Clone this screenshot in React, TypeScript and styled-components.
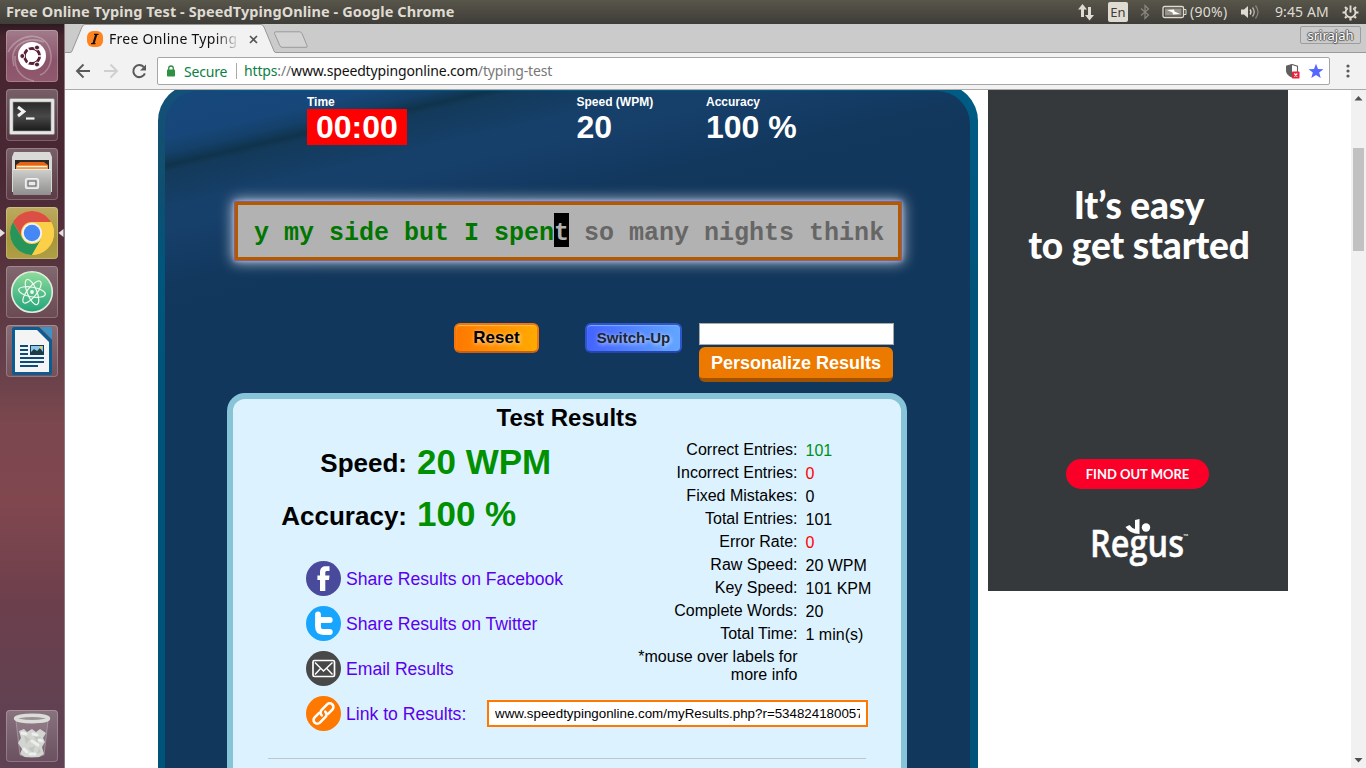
import React from 'react';
import styled, { createGlobalStyle } from 'styled-components';

const GlobalStyle = createGlobalStyle`
  * { box-sizing: border-box; }
  html, body { margin: 0; padding: 0; overflow: hidden; background: #fff; }
  svg { display: block; flex: none; }
`;

const uiFont = `'Noto Sans', 'Open Sans', sans-serif`;
const pageFont = `'Liberation Sans', Arial, sans-serif`;

const Screen = styled.div`
  width: 1366px;
  height: 768px;
  display: flex;
  flex-direction: column;
  overflow: hidden;
`;

/* ---------- system bar ---------- */
const SystemBar = styled.header`
  height: 24px;
  flex: none;
  display: flex;
  align-items: center;
  justify-content: space-between;
  padding: 0 7px 0 6px;
  background: linear-gradient(#58554a, #3f3d38);
  color: #dfdbd2;
  font-family: ${uiFont};
`;

const WindowTitle = styled.div`
  font-size: 14.5px;
  font-weight: 700;
  line-height: 22px;
  padding-bottom: 2px;
  white-space: nowrap;
  letter-spacing: 0.08px;
`;

const Indicators = styled.div`
  display: flex;
  align-items: center;
  height: 24px;
  font-size: 14px;
  white-space: nowrap;
`;

const Lang = styled.span`
  width: 20px;
  height: 20px;
  margin: 0 12px 0 13px;
  border-radius: 2px;
  background: #dfdbd2;
  color: #3f3d38;
  font-size: 13px;
  line-height: 21px;
  text-align: center;
`;

const BarText = styled.span<{ $w: number; $ml: number; $ls?: number }>`
  width: ${(p) => p.$w}px;
  margin-left: ${(p) => p.$ml}px;
  letter-spacing: ${(p) => p.$ls ?? 0}px;
  line-height: 22px;
  padding-bottom: 1px;
`;

const Workspace = styled.div`
  flex: 1;
  min-height: 0;
  display: flex;
`;

/* ---------- launcher ---------- */
const Dock = styled.nav`
  width: 65px;
  flex: none;
  display: flex;
  flex-direction: column;
  align-items: center;
  gap: 7px;
  padding: 6px 1px 6px 0;
  border-right: 1px solid #8d7780;
  background: linear-gradient(#2f1a22 0, #47252f 14px, #4a2833 150px, #65404a 340px, #7c474e 400px, #80474f 480px, #6c3f4c 580px, #5f4152 700px, #5f4253 100%);
`;

const Tile = styled.div<{ $bg?: string; $last?: boolean }>`
  width: 52px;
  height: 52px;
  flex: none;
  display: flex;
  align-items: center;
  justify-content: center;
  border-radius: 4px;
  margin-top: ${(p) => (p.$last ? 'auto' : '0')};
  background: ${(p) => p.$bg ?? 'linear-gradient(rgba(255,255,255,.26), rgba(255,255,255,.08))'};
  box-shadow: inset 0 0 0 1px rgba(255, 255, 255, 0.22);
`;

const ActiveRow = styled.div`
  width: 64px;
  display: flex;
  align-items: center;
  justify-content: space-between;
`;

/* ---------- browser chrome ---------- */
const Browser = styled.main`
  flex: 1;
  min-width: 0;
  display: flex;
  flex-direction: column;
`;

const TabStrip = styled.div`
  height: 29px;
  flex: none;
  display: flex;
  align-items: flex-start;
  background: linear-gradient(#cbcbcb 0 28px, #9a9a9a 28px);
`;

const Tab = styled.div`
  width: 214px;
  height: 29px;
  display: grid;
  grid-template: 29px / 214px;
  & > * { grid-area: 1 / 1; }
`;

const TabBody = styled.div`
  display: flex;
  align-items: center;
  padding: 1px 0 0 22px;
  font: 14px ${uiFont};
  color: #111;
`;

const TabTitle = styled.span`
  width: 129px;
  height: 22px;
  line-height: 22px;
  margin-left: 6px;
  overflow: hidden;
  white-space: nowrap;
  letter-spacing: 0.28px;
  mask-image: linear-gradient(90deg, #000 106px, transparent 131px);
`;

const User = styled.div`
  width: 61px;
  height: 18px;
  margin: 2px 5px 0 auto;
  border: 1px solid #9d9d9d;
  border-radius: 2px;
  color: #fff;
  font: 13px/16px ${uiFont};
  text-align: center;
  text-shadow: 0 1px 1px #555, 0 -1px 1px #555, 1px 0 1px #555, -1px 0 1px #555;
`;

const Toolbar = styled.div`
  height: 37px;
  flex: none;
  display: flex;
  align-items: center;
  padding: 0 5px 0 10px;
  background: #f2f2f2;
  border-bottom: 1px solid #aaa;
`;

const Omnibox = styled.div`
  width: 1173px;
  height: 28px;
  margin-left: 9px;
  display: flex;
  align-items: center;
  padding: 0 5px 0 8px;
  border: 1px solid #a6a6a6;
  border-radius: 2px;
  background: #fff;
  font: 14px ${uiFont};
  color: #111;
  white-space: nowrap;
`;

const Secure = styled.span`
  box-sizing: content-box;
  width: 43px;
  margin-left: 8px;
  padding-right: 9px;
  color: #0b8043;
  letter-spacing: -0.2px;
`;

const Url = styled.span`
  flex: 1;
  padding-left: 7px;
  line-height: 16px;
  border-left: 1px solid #aaa;
  letter-spacing: -0.15px;
`;

const Scheme = styled.span`color: #0b8043;`;
const Faint = styled.span`color: #777;`;

/* ---------- page ---------- */
const Page = styled.div`
  flex: 1;
  min-height: 0;
  display: flex;
  align-items: flex-start;
  padding-left: 93px;
  background: #fff;
  overflow: hidden;
  font-family: ${pageFont};
`;

const Panel = styled.section`
  width: 820px;
  height: 720px;
  flex: none;
  margin-top: -6px;
  padding: 7px 8px 0 7px;
  border-radius: 37px 37px 0 0;
  background:
    linear-gradient(#14507a 0, #11506f 78px, #0d4f72 110px, #00567c 190px, rgba(0, 86, 124, 0) 300px) 0 0 / 60px 100% no-repeat,
    linear-gradient(#005c85, #00547a 200px);
`;

const PanelInner = styled.div`
  height: 720px;
  border-radius: 33px 33px 0 0;
  padding: 5px 0 0 62px;
  background: linear-gradient(167deg, #17487b 0, #17477a 46px, #144069 61px, #0f334c 73px, #133a5a 79px, #163f69 112px, #163f6a 135px, #12385e 190px, #12375c 215px);
`;

const Stats = styled.div`
  display: grid;
  grid-template-columns: 269.500px 129.500px 130px;
  padding-left: 80px;
  height: 105px;
  color: #fff;
`;

const StatLabel = styled.div`
  font: bold 12px/13px ${pageFont};
`;

const StatValue = styled.div<{ $alert?: boolean }>`
  width: ${(p) => (p.$alert ? '100px' : 'auto')};
  height: 36px;
  padding-left: ${(p) => (p.$alert ? 9 : 0)}px;
  background: ${(p) => (p.$alert ? '#f00' : 'none')};
  font: bold 32px/37px ${pageFont};
  white-space: nowrap;
`;

const TypingBox = styled.div`
  width: 668px;
  height: 60px;
  margin-left: 7px;
  padding: 8px 0 0 16px;
  border: 4px solid #b35900;
  outline: 1px solid #8a5f80;
  outline-offset: -1px;
  background: #b2b2b2;
  box-shadow: 0 0 4px 0 rgba(175, 190, 255, 0.8), 0 0 13px 1px rgba(255, 255, 255, 0.75);
  font: bold 25px/34px 'Liberation Mono', 'Courier New', monospace;
  white-space: pre;
  color: #666;
`;

const Line = styled.span`
  display: inline-block;
  height: 34px;
  line-height: 42px;
  vertical-align: top;
`;
const Typed = styled.span`color: #007500;`;
const Cursor = styled(Line)`
  background: #000;
  color: #b2b2b2;
`;

const Controls = styled.div`
  display: flex;
  align-items: flex-start;
  padding: 62px 0 0 227px;
`;

const GlossButton = styled.button<{ $w: number; $blue?: boolean }>`
  width: ${(p) => p.$w}px;
  height: 30px;
  margin-right: ${(p) => (p.$blue ? 0 : 46)}px;
  padding: 0;
  border: 2px solid ${(p) => (p.$blue ? '#2f55cc' : '#f57410')};
  border-bottom-color: ${(p) => (p.$blue ? '#2546b0' : '#c85f14')};
  border-radius: 6px;
  background: linear-gradient(90deg, ${(p) => (p.$blue ? '#4463ff, #62a6ff' : '#ff7800, #ffab00')});
  box-shadow: inset 0 1px 1px ${(p) => (p.$blue ? '#7fb0ff' : '#ffc052')};
  color: ${(p) => (p.$blue ? '#1d2733' : '#000')};
  font: bold ${(p) => (p.$blue ? 15 : 17)}px/26px ${pageFont};
  white-space: nowrap;
  text-shadow: 1px 1px 4px rgba(255, 255, 255, 0.75);
`;

const Personalize = styled.div`
  width: 195px;
  margin-left: 17px;
`;

const NameField = styled.div`
  height: 22px;
  background: #fff;
  border: 1px solid #a9a9a9;
`;

const PersonalizeButton = styled.button`
  display: block;
  width: 194px;
  height: 35px;
  margin-top: 2px;
  padding: 2px 0 0;
  border: 0;
  border-bottom: 4px solid #a35200;
  border-radius: 6px;
  background: #ec7a00;
  color: #fff;
  font: bold 18px/29px ${pageFont};
`;

const Card = styled.div`
  width: 680px;
  height: 420px;
  margin-top: 11px;
  border: 6px solid #87c4d8;
  border-radius: 18px;
  background: #dcf2ff;
  color: #000;
`;

const CardTitle = styled.h2`
  margin: 0;
  height: 38px;
  font: bold 24px/38px ${pageFont};
  text-align: center;
`;

const CardBody = styled.div`
  display: flex;
  height: 264px;
`;

const Summary = styled.div`
  width: 360px;
  flex: none;
  padding-left: 35px;
`;

const ScoreRow = styled.div`
  display: flex;
  align-items: flex-start;
  height: 52px;
  white-space: nowrap;
  font-weight: 700;
`;

const ScoreLabel = styled.div<{ $lh: number }>`
  width: 139px;
  text-align: right;
  font-size: 26px;
  line-height: ${(p) => p.$lh}px;
`;

const ScoreValue = styled.div`
  margin-left: 10px;
  font-size: 35px;
  line-height: 50px;
  color: #009000;
`;

const ShareList = styled.div`
  display: flex;
  flex-direction: column;
  gap: 10px;
  padding: 20px 0 0 38px;
`;

const Share = styled.div`
  display: flex;
  align-items: center;
  height: 35px;
  gap: 5px;
  color: #5a00ee;
  font-size: 17.6px;
  white-space: nowrap;
`;

const ShareText = styled.span`
  padding-top: 2px;
`;

const Details = styled.dl`
  margin: 0;
  padding-top: 2px;
  display: grid;
  grid-template-columns: 204.500px 90px;
  grid-auto-rows: 23px;
  column-gap: 8px;
  font-size: 16px;
  align-content: start;
`;

const Term = styled.dt`
  line-height: 22px;
  text-align: right;
  white-space: nowrap;
`;

const Value = styled.dd<{ $c?: string }>`
  margin: 0;
  line-height: 24px;
  color: ${(p) => p.$c ?? '#000'};
  white-space: nowrap;
`;

const Hint = styled.dt`
  padding: 2px 0 0 30px;
  line-height: 18px;
  text-align: right;
`;

const LinkRow = styled.div`
  display: flex;
  align-items: center;
  height: 35px;
  margin-top: -5px;
  padding-left: 73px;
`;

const LinkField = styled.div`
  width: 381px;
  height: 27px;
  margin-left: auto;
  margin-right: 33px;
  padding: 0 6px;
  border: 2px solid #ff7800;
  background: #fff;
  font: 13.33px/23px ${pageFont};
  white-space: nowrap;
`;

const Clip = styled.div`overflow: hidden;`;

const Rule = styled.div`
  height: 1px;
  margin: 27px 35px 0;
  background: #c4c4c4;
`;

/* ---------- advert ---------- */
const Ad = styled.aside`
  width: 300px;
  height: 501px;
  flex: none;
  margin-left: 10px;
  padding-top: 95px;
  display: flex;
  flex-direction: column;
  align-items: center;
  background: #36393c;
  color: #fff;
  font-family: Lato, sans-serif;
`;

const AdHeadline = styled.div`
  height: 274px;
  padding-left: 2px;
  font-size: 37px;
  line-height: 40px;
  font-weight: 900;
  text-align: center;
  white-space: nowrap;
  letter-spacing: -0.15px;
`;

const AdButton = styled.div`
  width: 143px;
  height: 30px;
  margin-right: 1px;
  border-radius: 15px;
  background: #fa0029;
  font-size: 13px;
  font-weight: 700;
  line-height: 30px;
  text-align: center;
`;

const AdLogo = styled.div`padding: 26px 0 0 9px;`;

const Scrollbar = styled.div`
  width: 15px;
  height: 678px;
  margin-left: auto;
  flex: none;
  display: flex;
  flex-direction: column;
  align-items: center;
  background: #f1f1f1;
`;

const ArrowUp = styled.svg`margin-top: 4px;`;

const Thumb = styled.div`
  width: 11px;
  height: 103px;
  margin: 46px 0 auto;
  background: #c1c1c1;
`;

/* ---------- launcher icons ---------- */
const UbuntuIcon = () => (
  <svg width="52" height="52" viewBox="0 0 52 52">
    <g fill="none" stroke="#fff" strokeOpacity=".28" strokeWidth="1.6">
      <path d="M2 22C12 3 38 0 44 20C48 34 40 43 34 45" />
      <path d="M8 36C2 14 22 6 38 12" />
      <path d="M9 26C8 42 18 49 28 51" />
    </g>
    <circle cx="26" cy="26" r="14" fill="#fff" />
    <circle cx="26" cy="26" r="7.600" fill="none" stroke="#5a2238" strokeWidth="3" />
    <path d="M26 26L37 26M26 26L20.500 16.500M26 26L20.500 35.500" stroke="#fff" strokeWidth="1.600" />
    <circle cx="26" cy="26" r="6" fill="#fff" />
    <g fill="#5a2238" stroke="#fff" strokeWidth="1">
      <circle cx="16.300" cy="26" r="2.500" />
      <circle cx="31" cy="17.500" r="2.500" />
      <circle cx="31" cy="34.500" r="2.500" />
    </g>
  </svg>
);

const TerminalIcon = () => (
  <svg width="52" height="52" viewBox="0 0 52 52">
    <defs>
      <linearGradient id="term" x1="0" y1="0" x2="0" y2="1">
        <stop offset="0" stopColor="#2a2a2a" />
        <stop offset=".5" stopColor="#484848" />
        <stop offset="1" stopColor="#1b1b1b" />
      </linearGradient>
    </defs>
    <rect x="3.500" y="9.500" width="45" height="36" rx="1.500" fill="#e6e6e4" stroke="#8d8d8b" />
    <rect x="7" y="13" width="38" height="29" fill="url(#term)" stroke="#999" strokeWidth=".6" />
    <path d="M12 18L17.800 22.500L12 27" fill="none" stroke="#f2f2f2" strokeWidth="3" />
    <path d="M20 29.500H28.500" stroke="#f2f2f2" strokeWidth="2.200" />
  </svg>
);

const FilesIcon = () => (
  <svg width="52" height="52" viewBox="0 0 52 52">
    <defs>
      <linearGradient id="cab" x1="0" y1="0" x2="0" y2="1">
        <stop offset="0" stopColor="#cfcfcd" />
        <stop offset="1" stopColor="#8f8f8d" />
      </linearGradient>
    </defs>
    <path d="M6 9L8 4H44L46 9V44H6Z" fill="#d9d9d7" />
    <rect x="9" y="12" width="34" height="14" fill="#2b2724" />
    <path d="M10 17L14 14H38L42 17V26H10Z" fill="#e2641b" />
    <path d="M10 17.500H42V26H10Z" fill="#f19a42" />
    <path d="M11 18.500H41" stroke="#fff2d6" strokeWidth="1.300" />
    <rect x="7" y="21" width="38" height="26" rx="1" fill="url(#cab)" />
    <path d="M7 21.500H45" stroke="#e9e9e7" />
    <rect x="19.500" y="30.500" width="13" height="10" rx="2" fill="#ddd" stroke="#efefef" strokeWidth="1.200" />
    <rect x="22" y="33" width="8" height="5" fill="#e9e9e9" stroke="#555" />
  </svg>
);

const ChromeIcon = () => (
  <svg width="52" height="52" viewBox="0 0 52 52">
    <circle cx="26" cy="26" r="22" fill="#ffcd40" />
    <path d="M6.950 15A22 22 0 0 1 45.050 15H26A11 11 0 0 0 16.470 31.500Z" fill="#db4f45" />
    <path d="M6.950 15A22 22 0 0 0 26 48L35.530 31.500A11 11 0 0 1 16.470 31.500Z" fill="#27955a" />
    <path d="M45.050 15A22 22 0 0 1 26 48L35.530 31.500A11 11 0 0 0 26 15Z" fill="#fbcf48" />
    <circle cx="26" cy="26" r="10.200" fill="#f1f1f1" />
    <circle cx="26" cy="26" r="8.200" fill="#4587f4" />
  </svg>
);

const AtomIcon = () => (
  <svg width="52" height="52" viewBox="0 0 52 52">
    <defs>
      <linearGradient id="atom" x1="0" y1="0" x2="0" y2="1">
        <stop offset="0" stopColor="#8edd9a" />
        <stop offset="1" stopColor="#22a37b" />
      </linearGradient>
    </defs>
    <circle cx="26" cy="26" r="20.300" fill="url(#atom)" stroke="#e4ece2" strokeWidth="1.600" />
    <g fill="none" stroke="#effaf0" strokeWidth="1.200">
      <ellipse cx="26" cy="26" rx="13.500" ry="4.800" transform="rotate(10 26 26)" />
      <ellipse cx="26" cy="26" rx="13.500" ry="4.800" transform="rotate(68 26 26)" />
      <ellipse cx="26" cy="26" rx="13.500" ry="4.800" transform="rotate(128 26 26)" />
    </g>
    <circle cx="26" cy="26" r="1.900" fill="#effaf0" />
  </svg>
);

const WriterIcon = () => (
  <svg width="52" height="52" viewBox="0 0 52 52">
    <path d="M8 2H33L46 15V48Q46 50 44 50H8Q6 50 6 48V4Q6 2 8 2Z" fill="#0d5c91" />
    <path d="M34 2H44Q46 2 46 4V14Z" fill="#3f92c4" />
    <path d="M9 5H31L43 17V47H9Z" fill="#f4f4f4" />
    <g stroke="#0d4c79" strokeWidth="2">
      <path d="M14 21H22M14 25H22M14 29H22M14 33H38M14 37H38M14 41H32" />
    </g>
    <rect x="24.500" y="20.500" width="13" height="9" fill="#8cc8ea" stroke="#123c5c" />
    <path d="M25 29V27L28 24L31 26L34 23L37 27V29Z" fill="#1d3c44" />
    <circle cx="35" cy="22.500" r="1.300" fill="#f5d340" />
  </svg>
);

const TrashIcon = () => (
  <svg width="52" height="52" viewBox="0 0 52 52">
    <path d="M10 11L14 45Q26 50 38 45L42 11Z" fill="#fff" fillOpacity=".1" stroke="#ddd" strokeOpacity=".35" />
    <path d="M13 21L18 19L21 22L26 19L30 22L34 19L40 23L37 28L39 32L36 37L38 44L33 47H19L14 44L16 39L12 33L15 28Z" fill="#d2d5d0" />
    <path d="M18 25L24 29L20 34ZM28 26L35 27L31 33ZM22 38L29 36L27 43ZM33 38L35 42L31 44Z" fill="#c2c5c0" />
    <path d="M16 23L20 24M27 24L31 25M26 31L32 35M18 39L21 42M33 30L36 31M24 44H29" stroke="#ecefeb" strokeWidth="3" strokeLinecap="round" />
    <ellipse cx="26" cy="8.500" rx="16.500" ry="3.200" fill="#9a9297" stroke="#dcdcd8" strokeWidth="3.400" />
  </svg>
);

/* ---------- small icons ---------- */
const FacebookIcon = () => (
  <svg width="35" height="35" viewBox="0 0 35 35">
    <circle cx="17.500" cy="17.500" r="17.500" fill="#4a4a9c" />
    <path d="M14 30V19H11.400V14.500H14V11.500C14 7.200 16.300 5.300 20 5.300H23.500V10H21.300C19.700 10 19.300 10.600 19.300 12V14.500H23.500L23 19H19.300V30Z" fill="#fff" />
  </svg>
);

const TwitterIcon = () => (
  <svg width="35" height="35" viewBox="0 0 35 35">
    <circle cx="17.500" cy="17.500" r="17.500" fill="#18a5fe" />
    <path d="M12 8.500V20.500Q12 26 17.500 26H23.800M12 14H23.800" fill="none" stroke="#fff" strokeWidth="5.800" strokeLinecap="round" />
  </svg>
);

const MailIcon = () => (
  <svg width="35" height="35" viewBox="0 0 35 35">
    <circle cx="17.500" cy="17.500" r="17.500" fill="#484848" />
    <g fill="none" stroke="#fff" strokeWidth="1.700">
      <rect x="7" y="9.500" width="21.500" height="16" rx="1.500" />
      <path d="M9 11.500L17.500 20L26.500 11.500M9 23.500L14.500 17.500M26.500 23.500L20.800 17.500" strokeWidth="1.400" />
    </g>
  </svg>
);

const LinkIcon = () => (
  <svg width="35" height="35" viewBox="0 0 35 35">
    <circle cx="17.500" cy="17.500" r="17.500" fill="#ff7800" />
    <g fill="none" stroke="#fff" strokeWidth="2.600" transform="rotate(-45 17.500 17.500)" strokeLinecap="round">
      <path d="M14.500 14H8.500A3.700 3.700 0 0 0 8.500 21.400H16.500A3.700 3.700 0 0 0 20 17.500" />
      <path d="M20.500 21H26.500A3.700 3.700 0 0 0 26.500 13.600H18.500A3.700 3.700 0 0 0 15 17.500" />
    </g>
  </svg>
);

const RegusLogo = () => (
  <svg width="108" height="60" viewBox="0 0 108 60">
    <g fill="#fff">
      <text x="1" y="42" fontFamily="'Open Sans', sans-serif" fontWeight="600" fontSize="37" textLength="94" lengthAdjust="spacingAndGlyphs" stroke="#fff" strokeWidth=".4">Regus</text>
      <text x="94" y="24" fontFamily="Lato, sans-serif" fontSize="7">™</text>
      <circle cx="57" cy="12.500" r="4.200" />
      <path d="M46 5Q48.500 4.500 50.500 4V19Q41 19 36.500 12L40.500 10Q43 13.500 46 14Z" />
    </g>
  </svg>
);

const BatteryIcon = styled.svg`margin-left: 12px;`;
const SpeakerIcon = styled.svg`margin-left: 10px;`;
const GearIcon = styled.svg`margin-left: 11px;`;
const CloseIcon = styled.svg`margin-left: 11px;`;
const NewTab = styled.svg`margin: 7px 0 0 -6px;`;
const NavIcon = styled.svg`margin-left: 12px;`;
const StarIcon = styled.svg`margin-left: 8px;`;
const MenuIcon = styled.svg`margin-left: 16px;`;

const details: [string, string, string?][] = [
  ['Correct Entries:', '101', '#009020'],
  ['Incorrect Entries:', '0', '#f00'],
  ['Fixed Mistakes:', '0'],
  ['Total Entries:', '101'],
  ['Error Rate:', '0', '#f00'],
  ['Raw Speed:', '20 WPM'],
  ['Key Speed:', '101 KPM'],
  ['Complete Words:', '20'],
  ['Total Time:', '1 min(s)'],
];

export default function App() {
  return (
    <Screen>
      <GlobalStyle />
      <SystemBar>
        <WindowTitle>Free Online Typing Test - SpeedTypingOnline - Google Chrome</WindowTitle>
        <Indicators>
          <svg width="18" height="18" viewBox="0 0 18 18" fill="#dfdbd2">
            <path d="M5.500 1L10 6.500H7V14H4V6.500H1ZM12.500 17.500L8 12H11V4H14V12H17Z" />
          </svg>
          <Lang>En</Lang>
          <svg width="10" height="16" viewBox="0 0 10 16" fill="none" stroke="#8a877f" strokeWidth="1.200">
            <path d="M1 4.500L8.500 11L5 14.500V1.500L8.500 5L1 11.500" />
          </svg>
          <BatteryIcon width="25" height="14" viewBox="0 0 25 14">
            <rect x="1" y="1.500" width="20.500" height="11" rx="1.500" fill="none" stroke="#dfdbd2" strokeWidth="1.300" />
            <rect x="3" y="3.500" width="16.500" height="7" fill="#96938a" />
            <path d="M22 4.500H24V9.500H22" fill="none" stroke="#dfdbd2" />
            <path d="M5 5L12 4.500L12.500 6.500L18 9L11 9.500L10.500 7.500Z" fill="#fff" />
          </BatteryIcon>
          <BarText $w={40} $ml={3} $ls={0.3}>(90%)</BarText>
          <SpeakerIcon width="20" height="16" viewBox="0 0 20 16" fill="none" stroke="#dfdbd2" strokeWidth="1.300">
            <path d="M1 5.500H4L8 2V14L4 10.500H1Z" fill="#dfdbd2" stroke="none" />
            <path d="M10 5.500Q12 8 10 10.500" />
            <path d="M12.500 3.500Q16 8 12.500 12.500" strokeOpacity=".75" />
            <path d="M15.500 1.500Q20.500 8 15.500 14.500" strokeOpacity=".4" />
          </SpeakerIcon>
          <BarText $w={56} $ml={15} $ls={0.1}>9:45 AM</BarText>
          <GearIcon width="17" height="17" viewBox="0 0 17 17" fill="none" stroke="#dfdbd2">
            <path d="M5.800 4.200A5 5 0 1 0 11.200 4.200M8.500 1.500V8.500" strokeWidth="1.900" />
            <path d="M3 3L4.500 4.500M14 3L12.500 4.500M.5 8.500H3M14 8.500H16.500M3 14L4.500 12.500M14 14L12.500 12.500M8.500 14V16.500" strokeWidth="2.200" />
          </GearIcon>
        </Indicators>
      </SystemBar>
      <Workspace>
        <Dock>
          <Tile $bg="linear-gradient(#a27c8b, #8b5469 60%, #90596e)"><UbuntuIcon /></Tile>
          <Tile><TerminalIcon /></Tile>
          <Tile><FilesIcon /></Tile>
          <ActiveRow>
            <svg width="6" height="10" viewBox="0 0 6 10"><path d="M0 1L5 5L0 9Z" fill="#e5e0e2" /></svg>
            <Tile $bg="linear-gradient(#bcab60, #a8963d 60%, #b09e45)"><ChromeIcon /></Tile>
            <svg width="6" height="10" viewBox="0 0 6 10"><path d="M5.500 1L.5 5L5.500 9Z" fill="#e5e0e2" /></svg>
          </ActiveRow>
          <Tile><AtomIcon /></Tile>
          <Tile><WriterIcon /></Tile>
          <Tile $last><TrashIcon /></Tile>
        </Dock>
        <Browser>
          <TabStrip>
            <Tab>
              <svg width="214" height="29" viewBox="0 0 214 29">
                <path d="M0 29L0 28.500H5Q6.500 28.500 7 27L17 3Q18 .5 20 .5H196Q198 .5 199 3L209 27Q209.600 28.500 211 28.500H214V29Z" fill="#f2f2f2" />
                <path d="M0 28.500H5Q6.500 28.500 7 27L17 3Q18 .5 20 .5H196Q198 .5 199 3L209 27Q209.600 28.500 211 28.500H214" fill="none" stroke="#979797" />
              </svg>
              <TabBody>
                <svg width="16" height="16" viewBox="0 0 16 16">
                  <rect width="16" height="16" rx="6" fill="#ff8420" />
                  <path d="M7 3.300H11.500M4 12.700H8.500" stroke="#16100a" strokeWidth="1.200" fill="none" />
                  <path d="M9.300 3.500L6.500 12.500" stroke="#16100a" strokeWidth="2.200" />
                </svg>
                <TabTitle>Free Online Typing</TabTitle>
                <CloseIcon width="9" height="9" viewBox="0 0 9 9">
                  <path d="M1 1L8 8M8 1L1 8" stroke="#555" strokeWidth="1.600" />
                </CloseIcon>
              </TabBody>
            </Tab>
            <NewTab width="36" height="18" viewBox="0 0 36 18">
              <path d="M3 .8H26.500Q28.300 .8 29 2.500L34 14.500Q34.600 16.300 33 16.300H9Q7.500 16.300 6.800 14.500L1.500 2.500Q1 .8 3 .8Z" fill="#d3d3d3" stroke="#9a9a9a" />
            </NewTab>
            <User>srirajah</User>
          </TabStrip>
          <Toolbar>
            <svg width="16" height="16" viewBox="0 0 16 16" fill="none" stroke="#5a5a5a" strokeWidth="1.900">
              <path d="M15 8H2.500M8.500 1.500L2 8L8.500 14.500" />
            </svg>
            <NavIcon width="16" height="16" viewBox="0 0 16 16" fill="none" stroke="#cfcfcf" strokeWidth="1.900">
              <path d="M1 8H13.500M7.500 1.500L14 8L7.500 14.500" />
            </NavIcon>
            <NavIcon width="17" height="17" viewBox="0 0 17 17" fill="none" stroke="#5a5a5a" strokeWidth="2">
              <path d="M12.700 4A6 6 0 1 0 13.900 10.300" />
              <path d="M15 1.500V7.500H9Z" fill="#5a5a5a" stroke="none" />
            </NavIcon>
            <Omnibox>
              <svg width="10" height="12" viewBox="0 0 10 12">
                <rect x="1" y="4.500" width="8" height="7" rx=".8" fill="#2f8f43" />
                <path d="M2.700 5V3.300A2.300 2.300 0 0 1 7.300 3.300V5" fill="none" stroke="#2f8f43" strokeWidth="1.300" />
              </svg>
              <Secure>Secure</Secure>
              <Url><Scheme>https</Scheme><Faint>://</Faint>www.speedtypingonline.com<Faint>/typing-test</Faint></Url>
              <svg width="14" height="15" viewBox="0 0 14 15">
                <path d="M6 .5L11.500 2.200V7Q11 11 6 13Q1 11 .6 7V2.200Z" fill="#fff" stroke="#5f5f5f" strokeWidth="1.100" />
                <path d="M6 .5V13Q1 11 .6 7V2.200Z" fill="#5f5f5f" />
                <rect x="6" y="7.500" width="7.500" height="7" rx=".8" fill="#e6233b" />
                <path d="M8.300 9.500L11.300 12.500M11.300 9.500L8.300 12.500" stroke="#fff" strokeWidth="1.100" />
              </svg>
              <StarIcon width="16" height="16" viewBox="0 0 16 16">
                <path d="M8 .8L10 5.900L15.500 6.200L11.200 9.600L12.700 15L8 12L3.300 15L4.800 9.600L.5 6.200L6 5.900Z" fill="#5468ff" />
              </StarIcon>
            </Omnibox>
            <MenuIcon width="4" height="14" viewBox="0 0 4 14" fill="#5a5a5a">
              <circle cx="2" cy="2" r="1.600" /><circle cx="2" cy="7" r="1.600" /><circle cx="2" cy="12" r="1.600" />
            </MenuIcon>
          </Toolbar>
          <Page>
            <Panel>
              <PanelInner>
                <Stats>
                  <div><StatLabel>Time</StatLabel><StatValue $alert>00:00</StatValue></div>
                  <div><StatLabel>Speed (WPM)</StatLabel><StatValue>20</StatValue></div>
                  <div><StatLabel>Accuracy</StatLabel><StatValue>100 %</StatValue></div>
                </Stats>
                <TypingBox>
                  <Line><Typed>y my side but I spen</Typed></Line><Cursor>t</Cursor><Line> so many nights think</Line>
                </TypingBox>
                <Controls>
                  <GlossButton $w={85}>Reset</GlossButton>
                  <GlossButton $w={97} $blue>Switch-Up</GlossButton>
                  <Personalize>
                    <NameField />
                    <PersonalizeButton>Personalize Results</PersonalizeButton>
                  </Personalize>
                </Controls>
                <Card>
                  <CardTitle>Test Results</CardTitle>
                  <CardBody>
                    <Summary>
                      <ScoreRow><ScoreLabel $lh={52}>Speed:</ScoreLabel><ScoreValue>20 WPM</ScoreValue></ScoreRow>
                      <ScoreRow><ScoreLabel $lh={54}>Accuracy:</ScoreLabel><ScoreValue>100 %</ScoreValue></ScoreRow>
                      <ShareList>
                        <Share><FacebookIcon /><ShareText>Share Results on Facebook</ShareText></Share>
                        <Share><TwitterIcon /><ShareText>Share Results on Twitter</ShareText></Share>
                        <Share><MailIcon /><ShareText>Email Results</ShareText></Share>
                      </ShareList>
                    </Summary>
                    <Details>
                      {details.map(([label, value, color]) => (
                        <React.Fragment key={label}>
                          <Term>{label}</Term>
                          <Value $c={color}>{value}</Value>
                        </React.Fragment>
                      ))}
                      <Hint>*mouse over labels for more info</Hint>
                    </Details>
                  </CardBody>
                  <LinkRow>
                    <Share><LinkIcon /><ShareText>Link to Results:</ShareText></Share>
                    <LinkField><Clip>www.speedtypingonline.com/myResults.php?r=534824180057</Clip></LinkField>
                  </LinkRow>
                  <Rule />
                </Card>
              </PanelInner>
            </Panel>
            <Ad>
              <AdHeadline>It’s easy<br />to get started</AdHeadline>
              <AdButton>FIND OUT MORE</AdButton>
              <AdLogo><RegusLogo /></AdLogo>
            </Ad>
            <Scrollbar>
              <ArrowUp width="15" height="8" viewBox="0 0 15 8"><path d="M7.500 2L11.500 6.500H3.500Z" fill="#505050" /></ArrowUp>
              <Thumb />
              <svg width="15" height="12" viewBox="0 0 15 12"><path d="M7.500 6.500L11.500 2H3.500Z" fill="#505050" /></svg>
            </Scrollbar>
          </Page>
        </Browser>
      </Workspace>
    </Screen>
  );
}
